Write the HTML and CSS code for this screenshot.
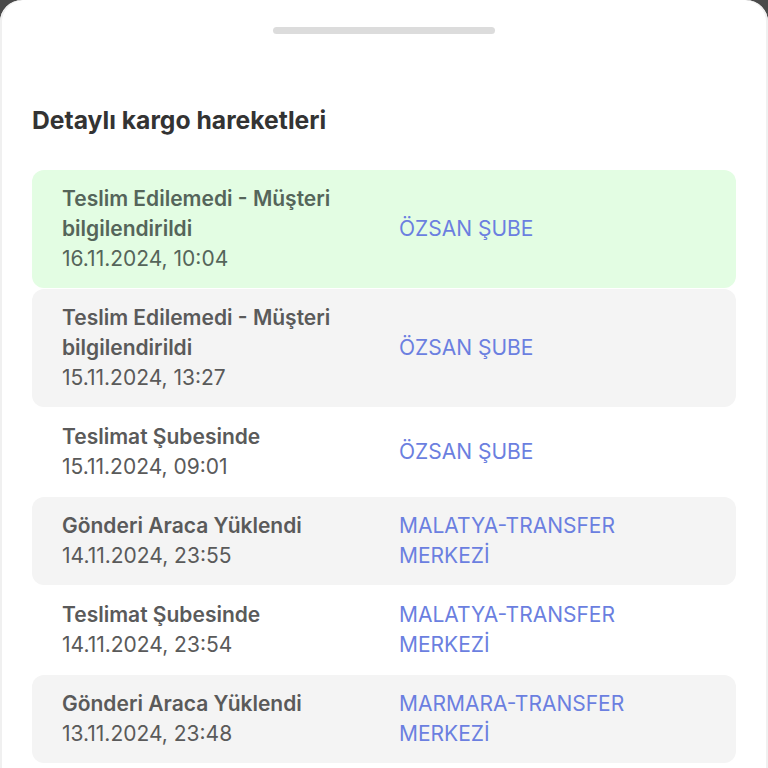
FILE: index.html
```html
<!DOCTYPE html>
<html lang="tr">
<head>
<meta charset="utf-8">
<link rel="stylesheet" href="styles.css">
</head>
<body>
<div class="sheet">
  <div class="handle"></div>
  <h1 class="title">Detaylı kargo hareketleri</h1>
  <div class="list">
    <div class="row row-green">
      <div class="info">
        <div class="status">Teslim Edilemedi - Müşteri bilgilendirildi</div>
        <div class="date">16.11.2024, 10:04</div>
      </div>
      <div class="place">ÖZSAN ŞUBE</div>
    </div>
    <div class="row row-gray">
      <div class="info">
        <div class="status">Teslim Edilemedi - Müşteri bilgilendirildi</div>
        <div class="date">15.11.2024, 13:27</div>
      </div>
      <div class="place">ÖZSAN ŞUBE</div>
    </div>
    <div class="row">
      <div class="info">
        <div class="status">Teslimat Şubesinde</div>
        <div class="date">15.11.2024, 09:01</div>
      </div>
      <div class="place">ÖZSAN ŞUBE</div>
    </div>
    <div class="row row-gray">
      <div class="info">
        <div class="status">Gönderi Araca Yüklendi</div>
        <div class="date">14.11.2024, 23:55</div>
      </div>
      <div class="place">MALATYA-TRANSFER MERKEZİ</div>
    </div>
    <div class="row">
      <div class="info">
        <div class="status">Teslimat Şubesinde</div>
        <div class="date">14.11.2024, 23:54</div>
      </div>
      <div class="place">MALATYA-TRANSFER MERKEZİ</div>
    </div>
    <div class="row row-gray">
      <div class="info">
        <div class="status">Gönderi Araca Yüklendi</div>
        <div class="date">13.11.2024, 23:48</div>
      </div>
      <div class="place">MARMARA-TRANSFER MERKEZİ</div>
    </div>
  </div>
</div>
</body>
</html>
```

FILE: styles.css
```css
html, body {
  margin: 0;
  padding: 0;
  height: 768px;
  overflow: hidden;
  background: #4a4a4a;
}
body {
  font-family: Inter, "Noto Sans", "Liberation Sans", sans-serif;
}
.sheet {
  background: #ffffff;
  border-radius: 22px 22px 0 0;
  height: 768px;
  box-sizing: border-box;
  padding: 27px 32px 0 32px;
  box-shadow: inset 2px 0 0 #f0f0f0, inset -2px 0 0 #f0f0f0;
}
.handle {
  width: 222px;
  height: 7px;
  border-radius: 4px;
  background: #dcdcdc;
  margin: 0 auto;
}
.title {
  margin: 71px 0 35px 0;
  font-size: 24.7px;
  line-height: 30px;
  font-weight: 700;
  color: #333333;
}
.list {
  display: flex;
  flex-direction: column;
  gap: 1px;
}
.row {
  display: grid;
  grid-template-columns: 337px 250px;
  align-items: center;
  padding: 14px 30px;
  border-radius: 12px;
  font-size: 21px;
  line-height: 30px;
}
.row-green { background: #e3fde3; }
.row-gray { background: #f4f4f4; }
.status {
  font-weight: 600;
  color: #5a5a5a;
}
.date {
  font-weight: 400;
  color: #5a5a5a;
}
.row-green .status, .row-green .date { color: #55655a; }
.place {
  color: #6b7fe0;
}
```
